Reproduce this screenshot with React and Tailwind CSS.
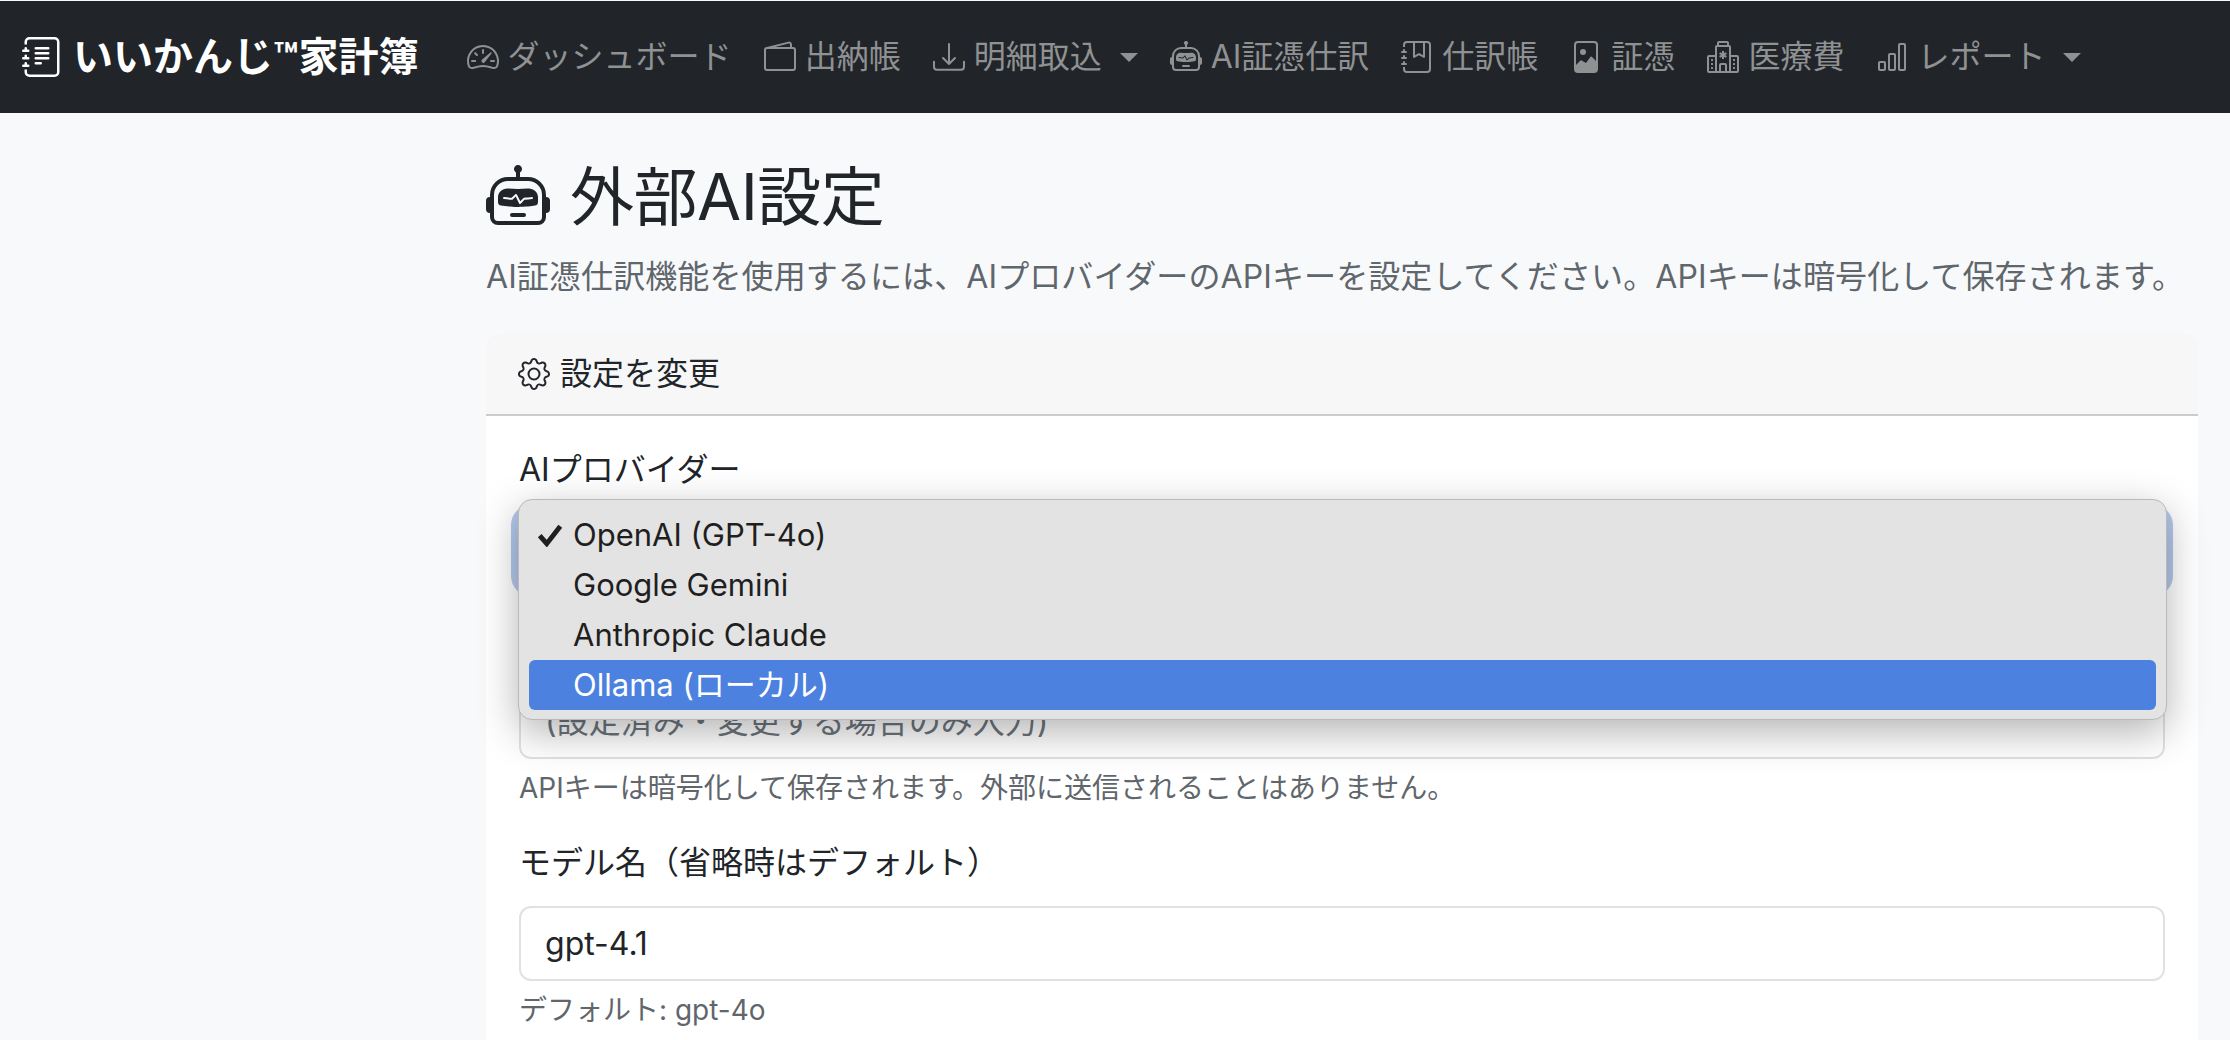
import {
  BsJournalText,
  BsSpeedometer2,
  BsWallet2,
  BsDownload,
  BsRobot,
  BsJournalBookmark,
  BsFileImage,
  BsHospital,
  BsBarChart,
  BsGear,
} from "react-icons/bs";

const font = "[font-family:Inter,'Noto_Sans_CJK_JP',sans-serif]";

const navItems = [
  { icon: BsSpeedometer2, label: "ダッシュボード" },
  { icon: BsWallet2, label: "出納帳" },
  { icon: BsDownload, label: "明細取込", caret: true },
  { icon: BsRobot, label: "AI証憑仕訳" },
  { icon: BsJournalBookmark, label: "仕訳帳" },
  { icon: BsFileImage, label: "証憑" },
  { icon: BsHospital, label: "医療費" },
  { icon: BsBarChart, label: "レポート", caret: true },
];

const options = ["OpenAI (GPT-4o)", "Google Gemini", "Anthropic Claude"];

const Navbar = () => (
  <nav className="h-[112px] mt-px bg-[#212529] flex items-center pl-[22px]">
    <a className="flex items-center gap-[11px] text-white text-[40px] font-bold mr-[48px] whitespace-nowrap">
      <BsJournalText className="text-[40px]" />
      いいかんじ™家計簿
    </a>
    <div className="flex items-center gap-[32px] text-[32px] text-[#8f9193]">
      {navItems.map((item) => (
        <a key={item.label} className="flex items-center gap-[9px] whitespace-nowrap">
          <item.icon className="text-[32px]" />
          {item.label}
          {item.caret && (
            <span className="ml-[9px] w-0 h-0 border-x-[9px] border-x-transparent border-t-[9px] border-t-[#8f9193]" />
          )}
        </a>
      ))}
    </div>
  </nav>
);

const Label = ({ children }) => (
  <label className="block text-[32px] leading-[48px] text-[#212529] mb-[19px]">{children}</label>
);

const Hint = ({ children }) => (
  <div className="text-[28px] leading-[42px] text-[#5f666c] mt-[8px]">{children}</div>
);

const inputClass =
  "h-[75px] rounded-[12px] border-2 border-[#dee2e6] bg-white flex items-center px-[24px] text-[32px]";

const SelectPopup = () => (
  <div className="absolute left-[-1px] right-[-2px] top-[-14px] h-[221px] z-10 rounded-[14px] bg-[#e3e3e3] border border-[#b9b9b9] shadow-[0_12px_40px_rgba(0,0,0,0.3)] p-[10px] text-[31px] text-[#1f1f1f]">
    {options.map((opt, i) => (
      <div key={opt} className="h-[50px] flex items-center pl-[44px] relative">
        {i === 0 && (
          <svg viewBox="0 0 24 22" className="absolute left-[8px] w-[26px] h-[24px]">
            <path d="M2.5 11.5 L9 19 L21.5 3" fill="none" stroke="#1f1f1f" strokeWidth="4.5" />
          </svg>
        )}
        {opt}
      </div>
    ))}
    <div className="h-[50px] flex items-center pl-[44px] rounded-[6px] bg-[#4c81e0] text-white">
      Ollama (ローカル)
    </div>
  </div>
);

const App = () => (
  <div className={`${font} h-[1040px] overflow-hidden bg-[#f8f9fb]`}>
    <Navbar />
    <main className="ml-[486px] w-[1712px] pt-[44px]">
      <h1 className="flex items-center text-[64px] leading-[80px] tracking-[-0.5px] text-[#212529] whitespace-nowrap">
        <BsRobot className="text-[64px] mr-[20px]" />
        外部AI設定
      </h1>
      <p className="text-[32px] leading-[48px] tracking-[0.1px] text-[#5f666c] mt-[16px] whitespace-nowrap">
        AI証憑仕訳機能を使用するには、AIプロバイダーのAPIキーを設定してください。APIキーは暗号化して保存されます。
      </p>
      <section className="mt-[32px] rounded-t-[14px] bg-white">
        <div className="h-[83px] rounded-t-[14px] bg-[#f7f7f7] border-b-2 border-[#cccccc] flex items-center gap-[10px] px-[32px] text-[32px] text-[#212529]">
          <BsGear className="text-[32px]" />
          設定を変更
        </div>
        <div className="px-[33px] pt-[30px] pb-[32px]">
          <Label>AIプロバイダー</Label>
          <div className="relative">
            <div className={`${inputClass} shadow-[0_0_0_8px_#b5c9ec]`} />
            <SelectPopup />
          </div>
          <div className="mt-[29px]">
            <Label>&nbsp;</Label>
            <div className={`${inputClass} text-[#6c757d]`}>(設定済み・変更する場合のみ入力)</div>
            <Hint>APIキーは暗号化して保存されます。外部に送信されることはありません。</Hint>
          </div>
          <div className="mt-[30px]">
            <Label>モデル名（省略時はデフォルト）</Label>
            <div className={`${inputClass} text-[#212529]`}>gpt-4.1</div>
            <Hint>デフォルト: gpt-4o</Hint>
          </div>
        </div>
      </section>
    </main>
  </div>
);

export default App;
